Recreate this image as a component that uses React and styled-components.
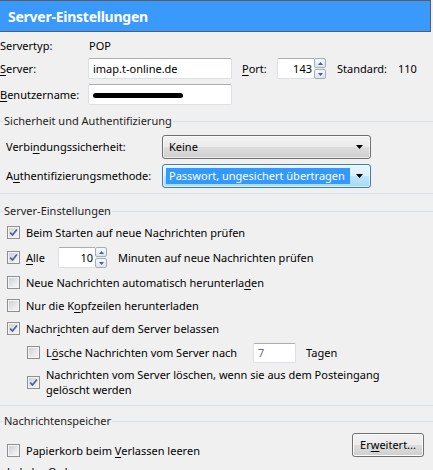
import React from "react";
import styled, { createGlobalStyle } from "styled-components";

const Global = createGlobalStyle`
  html, body { margin: 0; padding: 0; background: #f0f0f0; }
  body {
    font-family: "Noto Sans", "Open Sans", sans-serif;
    font-size: 11px;
    color: #000;
    overflow: hidden;
  }
  #root { width: 433px; height: 470px; overflow: hidden; }
`;

const Page = styled.div`
  width: 433px;
  height: 470px;
  overflow: hidden;
  background: #f0f0f0;
  display: flex;
  flex-direction: column;
  line-height: 16px;
`;

const TitleBar = styled.header`
  flex: none;
  height: 29px;
  margin-right: 2px;
  border: 1px solid #5c5c5c;
  border-left: none;
  background: #3a99fc;
  color: #fff;
  font-weight: 700;
  font-size: 14px;
  letter-spacing: -0.25px;
  padding: 1px 0 0 8px;
  box-sizing: content-box;
  display: flex;
  align-items: center;
`;

const ServerBlock = styled.div`
  display: flex;
  flex-direction: column;
  padding-top: 3px;
`;

const FormRow = styled.div`
  display: flex;
  align-items: center;
  height: ${(p) => p.$h || 21}px;
  margin-top: ${(p) => p.$mt || 0}px;
`;

const FormLabel = styled.span`
  flex: none;
  width: ${(p) => p.$w}px;
  margin-left: ${(p) => p.$ml || 0}px;
  white-space: nowrap;
`;

const Key = styled.u`
  text-decoration: underline;
  text-underline-offset: 2px;
`;

const TextField = styled.div`
  box-sizing: border-box;
  width: ${(p) => p.$w}px;
  height: ${(p) => p.$h || 21}px;
  border: 1px solid #dbdfe6;
  border-top-color: #abadb3;
  border-radius: 2px;
  background: #fff;
  padding: 0 4px;
  display: flex;
  align-items: center;
  color: ${(p) => (p.$disabled ? "#6d6d6d" : "#000")};
  flex: none;
`;

const Scribble = styled.span`
  display: inline-block;
  width: 90px;
  height: 5px;
  margin-top: 1px;
  background: #000;
  border-radius: 3px;
  filter: blur(0.3px);
`;

const SpinBox = styled.div`
  display: flex;
  flex: none;
  height: ${(p) => p.$h}px;
`;

const SpinField = styled.div`
  box-sizing: border-box;
  width: ${(p) => p.$w}px;
  height: 100%;
  border: 1px solid #dbdfe6;
  border-top-color: #abadb3;
  border-right: none;
  border-radius: 2px 0 0 2px;
  background: #fff;
  padding-right: 2px;
  display: flex;
  align-items: center;
  justify-content: flex-end;
`;

const SpinButtons = styled.div`
  display: flex;
  flex-direction: column;
  width: 12px;
  gap: 1px;
`;

const SpinButton = styled.div`
  flex: 1;
  box-sizing: border-box;
  border: 1px solid #a3acba;
  border-radius: 2px;
  background: linear-gradient(#f6f8fa, #dfe5ec);
  display: flex;
  align-items: center;
  justify-content: center;
`;

const Group = styled.fieldset`
  margin: ${(p) => p.$mt}px 0 0 0;
  padding: 0 0 0 3px;
  border: none;
  border-top: 1px solid #d5dfe5;
  border-bottom: 1px solid #d5dfe5;
  min-width: 0;
`;

const GroupTitle = styled.legend`
  padding: 0 1px;
  line-height: 16px;
  color: #1e1e1e;
`;

const GroupBody = styled.div`
  display: flex;
  flex-direction: column;
  gap: ${(p) => p.$gap || 0}px;
  padding: ${(p) => p.$pt}px 0 ${(p) => p.$pb}px 3px;
`;

const ComboRow = styled.div`
  display: flex;
  align-items: center;
  height: 24px;
`;

const Combo = styled.div`
  box-sizing: border-box;
  width: 209px;
  height: 24px;
  border: 1px solid ${(p) => (p.$focused ? "#3c7fb1" : "#707070")};
  border-radius: 3px;
  background: ${(p) =>
    p.$focused
      ? "linear-gradient(#eaf6fd 0%, #d9f0fc 50%, #bee6fd 51%, #a7d9f5 100%)"
      : "linear-gradient(#f2f2f2 0%, #ebebeb 50%, #dddddd 51%, #cfcfcf 100%)"};
  box-shadow: inset 0 0 0 1px rgba(255, 255, 255, 0.6);
  display: flex;
  align-items: center;
  padding: 0 7px 0 3px;
`;

const ComboText = styled.span`
  flex: 1;
  display: flex;
  align-items: center;
`;

const ComboValue = styled.span`
  padding: 0 5px 0 3px;
  line-height: 16px;
  background: ${(p) => (p.$selected ? "#3399ff" : "transparent")};
  color: ${(p) => (p.$selected ? "#fff" : "#000")};
  white-space: nowrap;
`;

const CheckRow = styled.div`
  display: flex;
  align-items: center;
  height: ${(p) => p.$h || 23}px;
  padding-left: ${(p) => 1 + (p.$indent || 0)}px;
  white-space: nowrap;
`;

const Box = styled.span`
  box-sizing: border-box;
  flex: none;
  width: 13px;
  height: 13px;
  margin-right: 6px;
  border: 1px solid #8e8f8f;
  background: linear-gradient(135deg, #c9ccd1 0%, #e6e7e9 55%, #f7f7f7 100%);
  box-shadow: inset 0 0 0 1px #f4f4f4;
  display: flex;
  align-items: center;
  justify-content: center;
`;

const CheckText = styled.span`
  flex: none;
  width: ${(p) => (p.$w ? `${p.$w}px` : "auto")};
  white-space: ${(p) => (p.$wrap ? "normal" : "nowrap")};
  line-height: ${(p) => (p.$wrap ? "15px" : "16px")};
`;

const Trailing = styled.span`
  margin-left: ${(p) => p.$ml}px;
  white-space: nowrap;
`;

const StoreRow = styled.div`
  display: flex;
  align-items: flex-end;
  justify-content: space-between;
  padding: 4px 9px 0 4px;
`;

const CheckInline = styled.div`
  display: flex;
  align-items: center;
  height: 13px;
`;

const PushButton = styled.button`
  box-sizing: border-box;
  width: 72px;
  height: 24px;
  padding: 0;
  border: 1px solid #707070;
  border-radius: 3px;
  background: linear-gradient(#f2f2f2 0%, #ebebeb 50%, #dddddd 51%, #cfcfcf 100%);
  box-shadow: inset 0 0 0 1px #fcfcfc;
  font: inherit;
  color: #000;
  line-height: 16px;
`;

const FolderLabel = styled.div`
  padding: 7px 0 0 4px;
  white-space: nowrap;
`;

const Check = ({ checked }) => (
  <Box>
    {checked && (
      <svg width="9" height="9" viewBox="0 0 9 9">
        <path d="M1.2 4.6 L3.5 7.1 L7.9 1.4" fill="none" stroke="#4b5f96" strokeWidth="1.6" />
      </svg>
    )}
  </Box>
);

const Arrow = ({ up }) => (
  <svg width="5" height="3" viewBox="0 0 5 3">
    <path d={up ? "M0 3 L2.5 0 L5 3 Z" : "M0 0 L5 0 L2.5 3 Z"} fill="#4d6185" />
  </svg>
);

const Spin = ({ value, w, h }) => (
  <SpinBox $h={h}>
    <SpinField $w={w}>{value}</SpinField>
    <SpinButtons>
      <SpinButton>
        <Arrow up />
      </SpinButton>
      <SpinButton>
        <Arrow />
      </SpinButton>
    </SpinButtons>
  </SpinBox>
);

const DropArrow = () => (
  <svg width="7" height="4" viewBox="0 0 7 4">
    <path d="M0 0 L7 0 L3.5 4 Z" fill="#000" />
  </svg>
);

export default function App() {
  return (
    <>
      <Global />
      <Page>
        <TitleBar>Server-Einstellungen</TitleBar>

        <ServerBlock>
          <FormRow $h={22}>
            <FormLabel $w={89}>Servertyp:</FormLabel>
            <span>POP</span>
          </FormRow>
          <FormRow $mt={1}>
            <FormLabel $w={88}>
              <Key>S</Key>erver:
            </FormLabel>
            <TextField $w={144}>imap.t-online.de</TextField>
            <FormLabel $w={35} $ml={10}>
              <Key>P</Key>ort:
            </FormLabel>
            <Spin value="143" w={37} h={21} />
            <FormLabel $w={61} $ml={11}>
              Standard:
            </FormLabel>
            <span>110</span>
          </FormRow>
          <FormRow $mt={5}>
            <FormLabel $w={88}>
              <Key>B</Key>enutzername:
            </FormLabel>
            <TextField $w={144}>
              <Scribble />
            </TextField>
          </FormRow>
        </ServerBlock>

        <Group $mt={8}>
          <GroupTitle>Sicherheit und Authentifizierung</GroupTitle>
          <GroupBody $pt={6} $pb={5} $gap={5}>
            <ComboRow>
              <FormLabel $w={156}>
                Verbi<Key>n</Key>dungssicherheit:
              </FormLabel>
              <Combo>
                <ComboText>
                  <ComboValue>Keine</ComboValue>
                </ComboText>
                <DropArrow />
              </Combo>
            </ComboRow>
            <ComboRow>
              <FormLabel $w={156}>
                A<Key>u</Key>thentifizierungsmethode:
              </FormLabel>
              <Combo $focused>
                <ComboText>
                  <ComboValue $selected>Passwort, ungesichert übertragen</ComboValue>
                </ComboText>
                <DropArrow />
              </Combo>
            </ComboRow>
          </GroupBody>
        </Group>

        <Group $mt={9}>
          <GroupTitle>Server-Einstellungen</GroupTitle>
          <GroupBody $pt={2} $pb={6}>
            <CheckRow>
              <Check checked />
              <CheckText>
                Beim Starten auf neue Na<Key>c</Key>hrichten prüfen
              </CheckText>
            </CheckRow>
            <CheckRow $h={27}>
              <Check checked />
              <CheckText $w={32}>
                <Key>A</Key>lle
              </CheckText>
              <Spin value="10" w={37} h={21} />
              <Trailing $ml={11}>Minuten auf neue Nachrichten prüfen</Trailing>
            </CheckRow>
            <CheckRow>
              <Check />
              <CheckText>
                Neue Nachrichten automatisch herunterla<Key>d</Key>en
              </CheckText>
            </CheckRow>
            <CheckRow>
              <Check />
              <CheckText>
                Nur die K<Key>o</Key>pfzeilen herunterladen
              </CheckText>
            </CheckRow>
            <CheckRow>
              <Check checked />
              <CheckText>
                Nachr<Key>i</Key>chten auf dem Server belassen
              </CheckText>
            </CheckRow>
            <CheckRow $h={25} $indent={20}>
              <Check />
              <CheckText $w={207}>
                L<Key>ö</Key>sche Nachrichten vom Server nach
              </CheckText>
              <TextField $w={43} $h={20} $disabled>
                7
              </TextField>
              <Trailing $ml={10}>Tagen</Trailing>
            </CheckRow>
            <CheckRow $h={34} $indent={20}>
              <Check checked />
              <CheckText $wrap $w={370}>
                Nachrichten vom Server löschen, wenn sie aus dem Posteingang
                <br />
                gelöscht werden
              </CheckText>
            </CheckRow>
          </GroupBody>
        </Group>

        <Group $mt={7}>
          <GroupTitle>Nachrichtenspeicher</GroupTitle>
          <StoreRow>
            <CheckInline>
              <Check />
              <CheckText>
                Papierkorb beim <Key>V</Key>erlassen leeren
              </CheckText>
            </CheckInline>
            <PushButton>
              Er<Key>w</Key>eitert...
            </PushButton>
          </StoreRow>
          <FolderLabel>Lokaler Ordner:</FolderLabel>
        </Group>
      </Page>
    </>
  );
}
